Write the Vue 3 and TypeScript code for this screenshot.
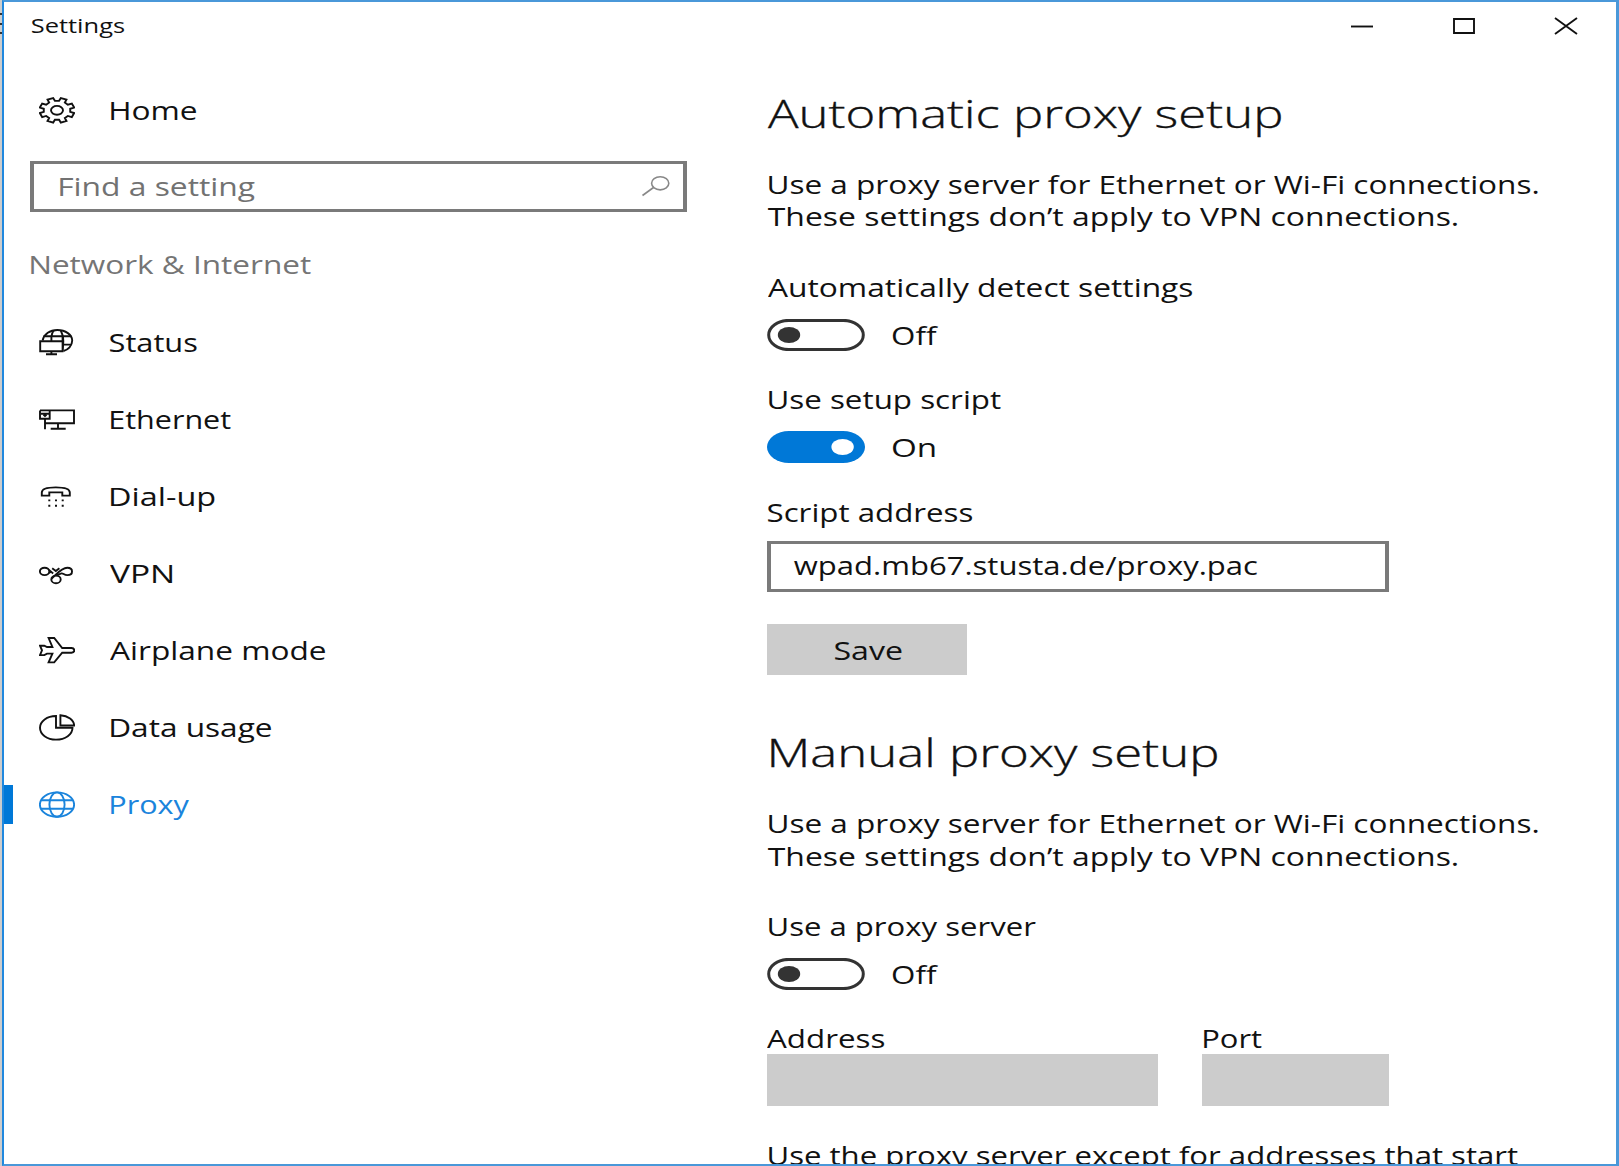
<script setup lang="ts">
import { nextTick, type Directive } from 'vue'

interface NavItem {
  id: string
  label: string
  width: number
  active?: boolean
}

interface FieldSet {
  title: string
  titleWidth: number
}

/* Stretches a line of text horizontally until its ink is exactly `width` px wide. */
function stretch(el: HTMLElement, width: number) {
  const style = getComputedStyle(el)
  const ctx = document.createElement('canvas').getContext('2d')
  if (!ctx) return
  const size = parseFloat(style.fontSize)
  const zoom = 10
  ctx.font = `${style.fontWeight} ${size * zoom}px ${style.fontFamily}`
  const text = (el.textContent ?? '').trim()
  const m = ctx.measureText(text)
  const left = m.actualBoundingBoxLeft / zoom
  const ink = left + m.actualBoundingBoxRight / zoom
  if (!ink) return
  const nudge = /^[HEDPNFUM]/.test(text) ? 1.2 : 0
  const scale = (width - nudge) / ink
  el.style.transform = `translateX(${left * scale + nudge}px) scaleX(${scale})`
}

const vFit: Directive<HTMLElement, number> = {
  mounted: (el, binding) => {
    nextTick(() => stretch(el, binding.value))
  },
}

const nav: NavItem[] = [
  { id: 'status', label: 'Status', width: 86.5 },
  { id: 'ethernet', label: 'Ethernet', width: 120.5 },
  { id: 'dialup', label: 'Dial-up', width: 104.5 },
  { id: 'vpn', label: 'VPN', width: 62 },
  { id: 'airplane', label: 'Airplane mode', width: 215 },
  { id: 'data', label: 'Data usage', width: 161 },
  { id: 'proxy', label: 'Proxy', width: 79, active: true },
]

const auto: FieldSet = { title: 'Automatic proxy setup', titleWidth: 513 }
const manual: FieldSet = { title: 'Manual proxy setup', titleWidth: 447 }

function gearPath(): string {
  const pts: string[] = []
  for (let k = 0; k < 8; k++) {
    const mid = 22.5 + k * 45
    const steps: [number, number][] = [[-13.5, 0.76], [-10, 1], [10, 1], [13.5, 0.76]]
    for (const [off, r] of steps) {
      const a = ((mid + off) * Math.PI) / 180
      pts.push(`${(18 + 17.6 * r * Math.cos(a)).toFixed(2)} ${(15.3 + 12.6 * r * Math.sin(a)).toFixed(2)}`)
    }
  }
  return `M${pts.join('L')}Z`
}
const gear = gearPath()
</script>

<template>
  <div class="window">
    <header class="titlebar">
      <span v-fit="92" class="t caption">Settings</span>
      <div class="controls">
        <svg width="24" height="18" viewBox="0 0 24 18"><path d="M1 9.5H23" /></svg>
        <svg width="24" height="18" viewBox="0 0 24 18"><path d="M2 2H22V16H2Z" /></svg>
        <svg width="24" height="18" viewBox="0 0 24 18"><path d="M1 1L23 17M23 1L1 17" /></svg>
      </div>
    </header>

    <div class="body">
      <nav class="sidebar">
        <div class="home">
          <svg class="icon" viewBox="0 0 36 30">
            <path :d="gear" />
            <ellipse cx="18" cy="15.3" rx="6" ry="4.4" />
          </svg>
          <span v-fit="86" class="t">Home</span>
        </div>

        <div class="search">
          <span v-fit="195.5" class="t">Find a setting</span>
          <svg width="30" height="22" viewBox="0 0 30 22">
            <ellipse cx="19.2" cy="8.3" rx="8.6" ry="6.6" />
            <path d="M12.5 12.5L1.5 20.5" />
          </svg>
        </div>

        <div class="group"><span v-fit="280.5" class="t">Network &amp; Internet</span></div>

        <ul class="items">
          <li v-for="item in nav" :key="item.id" :class="['item', { active: item.active }]">
            <svg class="icon" viewBox="0 0 36 30">
              <g v-if="item.id === 'status'">
                <path d="M3.6 13.5C5 7 11 3 18.3 3C26.6 3 33.2 7.8 33.2 13.6C33.2 19 29 22.8 24.5 24" />
                <path d="M4.5 9.3H32.3M1.2 14.2H23.6V24.2H1.2ZM24 17.6H32.5M12.4 9.3V14M23.6 9.3V14M12.4 24.2V27M7 27.3H18M14.8 3.5Q12.8 6 12.4 9.3M21.8 3.5Q24.6 9 24.3 14.2T23.8 23.5" />
              </g>
              <g v-else-if="item.id === 'ethernet'">
                <path d="M1 6.4H35V19.3H6M1 6.4V14.7H10.7V6.4M6 14.7V25.2M19 19.3V24.7M11.7 24.8H26.7" />
                <path d="M2 9.7H10M4.5 10.8L6 12L7.5 10.8" />
              </g>
              <g v-else-if="item.id === 'dialup'">
                <path d="M2.8 11.5C2.8 8 9 6.4 16.8 6.4C24.6 6.4 30.8 8 30.8 11.5V14.6H23.3V11.4H10.3V14.6H2.8Z" />
                <path d="M9.3 19.4H11.3M16 19.4H18M22.7 19.4H24.7M9.3 24.7H11.3M16 24.7H18M22.7 24.7H24.7" />
              </g>
              <g v-else-if="item.id === 'vpn'">
                <ellipse cx="5.6" cy="13.4" rx="4.7" ry="3.7" />
                <path d="M10 12L14.2 15.4M10 15L12.4 13.4M13.2 10.3L16.8 13L20.4 10.3" />
                <path d="M12.6 20.6C16.5 18 21.5 9.7 28.3 9.7C34.6 9.7 34.6 17.1 28.3 17.1C25 17.1 24.4 15.2 22.6 15.4C20.6 15.8 18.6 17.3 17.4 17.6" />
                <ellipse cx="17" cy="21.4" rx="4.7" ry="3.8" />
              </g>
              <g v-else-if="item.id === 'airplane'">
                <path d="M9.6 3H15.2L23.2 13H32.5C36.2 13.3 36.2 17.4 32.5 17.7H23.2L15.2 27.4H9.6L13.4 18.6H8L5.3 20.1H1L3 15.3L1 10.7H5.3L8 12H13.4Z" />
              </g>
              <g v-else-if="item.id === 'data'">
                <path d="M17 4V15.7H33.5C33.5 22.4 26.4 27.6 17 27.6C8 27.6 1 22.4 1 15.7C1 9.2 8 4 17 4Z" />
                <path d="M21.4 3.2C29 3.6 35.1 8 35.1 13.5H21.4Z" />
              </g>
              <g v-else>
                <ellipse cx="18" cy="15.6" rx="17.1" ry="12.2" />
                <ellipse cx="18" cy="15.6" rx="7.6" ry="12.2" />
                <path d="M2 11.2H34M2 19.8H34" />
              </g>
            </svg>
            <span v-fit="item.width" class="t">{{ item.label }}</span>
          </li>
        </ul>
      </nav>

      <main class="content">
        <section class="auto">
          <h1><span v-fit="auto.titleWidth" class="t">{{ auto.title }}</span></h1>
          <p class="desc">
            <span v-fit="769.5" class="t">Use a proxy server for Ethernet or Wi-Fi connections.</span>
            <span v-fit="689" class="t">These settings don’t apply to VPN connections.</span>
          </p>

          <div class="label detect"><span v-fit="424" class="t">Automatically detect settings</span></div>
          <div class="toggle-row">
            <svg class="toggle" viewBox="0 0 98 32">
              <rect class="track" x="1.7" y="1.4" width="94.6" height="29.2" rx="20" ry="14.6" />
              <ellipse class="knob" cx="22" cy="16" rx="11.2" ry="8.1" />
            </svg>
            <span v-fit="45" class="t">Off</span>
          </div>

          <div class="label script"><span v-fit="232.5" class="t">Use setup script</span></div>
          <div class="toggle-row">
            <svg class="toggle on" viewBox="0 0 98 32">
              <rect class="track" x="0" y="0" width="98" height="32" rx="22" ry="16" />
              <ellipse class="knob" cx="75.6" cy="16" rx="11.2" ry="8.1" />
            </svg>
            <span v-fit="41.5" class="t">On</span>
          </div>

          <div class="label address"><span v-fit="204" class="t">Script address</span></div>
          <div class="input"><span v-fit="463" class="t">wpad.mb67.stusta.de/proxy.pac</span></div>
          <button class="save" type="button"><span v-fit="66.5" class="t">Save</span></button>
        </section>

        <section class="manual">
          <h1><span v-fit="manual.titleWidth" class="t">{{ manual.title }}</span></h1>
          <p class="desc">
            <span v-fit="769.5" class="t">Use a proxy server for Ethernet or Wi-Fi connections.</span>
            <span v-fit="689" class="t">These settings don’t apply to VPN connections.</span>
          </p>

          <div class="label detect"><span v-fit="267.5" class="t">Use a proxy server</span></div>
          <div class="toggle-row">
            <svg class="toggle" viewBox="0 0 98 32">
              <rect class="track" x="1.7" y="1.4" width="94.6" height="29.2" rx="20" ry="14.6" />
              <ellipse class="knob" cx="22" cy="16" rx="11.2" ry="8.1" />
            </svg>
            <span v-fit="45" class="t">Off</span>
          </div>

          <div class="pair">
            <div class="field wide">
              <span v-fit="117" class="t">Address</span>
              <div class="disabled"></div>
            </div>
            <div class="field narrow">
              <span v-fit="58.5" class="t port">Port</span>
              <div class="disabled"></div>
            </div>
          </div>
          <div class="except"><span v-fit="749.5" class="t">Use the proxy server except for addresses that start</span></div>
        </section>
      </main>
    </div>
  </div>
</template>

<style>
body {
  margin: 0;
  overflow: hidden;
  background: linear-gradient(#333 0 0) 0 13px / 2px 2px no-repeat,
    linear-gradient(#333 0 0) 0 23px / 2px 2px no-repeat,
    linear-gradient(#333 0 0) 0 32px / 2px 2px no-repeat, #cdcdcd;
}
</style>

<style scoped>
.window {
  box-sizing: border-box;
  width: 1617px;
  height: 1166px;
  margin-left: 2px;
  border: 2px solid #4a98d9;
  border-left-color: #2088de;
  border-right-width: 3px;
  background: #fff;
  overflow: hidden;
  display: flex;
  flex-direction: column;
  font-family: 'Open Sans', 'Noto Sans', sans-serif;
  font-size: 25px;
  line-height: 32px;
  color: #111;
}

.t {
  display: block;
  width: max-content;
  white-space: nowrap;
  transform-origin: 0 50%;
}

svg {
  display: block;
  flex: none;
  fill: none;
  stroke: currentColor;
  stroke-width: 1.9;
}

.titlebar {
  flex: none;
  height: 57px;
  box-sizing: border-box;
  display: flex;
  justify-content: space-between;
  align-items: flex-start;
  padding: 7px 38px 0 27.5px;
}

.caption {
  font-size: 20.5px;
}

.controls {
  display: flex;
  gap: 78px;
  padding-top: 8px;
}

.controls svg {
  stroke: #111;
}

.body {
  flex: 1;
  min-height: 0;
  display: flex;
}

.sidebar {
  flex: none;
  width: 763px;
}

.home,
.item {
  display: flex;
  align-items: center;
  gap: 35px;
  padding-left: 35px;
}

.home {
  height: 32px;
  margin-top: 35px;
}

.icon {
  width: 36px;
  height: 30px;
}

.search {
  box-sizing: border-box;
  width: 657px;
  height: 51px;
  margin: 35px 0 0 26px;
  padding: 0 12px 2px 25px;
  border: solid #7a7a7a;
  border-width: 3px 4px;
  display: flex;
  align-items: center;
  justify-content: space-between;
  color: #727272;
}

.search svg {
  stroke: #888;
  stroke-width: 1.6;
}

.group {
  margin: 36px 0 0 26px;
  color: #757575;
}

.items {
  list-style: none;
  margin: 23.3px 0 0;
  padding: 0;
}

.item {
  height: 77.05px;
  background: linear-gradient(#0078d7 0 0) -10px 50% / 0 39px no-repeat;
}

.item.active {
  color: #1a84dc;
  background-position: 0 50%;
  background-size: 9px 39px;
}

.content {
  flex: none;
  width: 840px;
}

h1 {
  margin: 0;
  font-size: 38.8px;
  font-weight: 300;
  line-height: 53px;
  -webkit-text-stroke: 0.35px #111;
}

.auto h1 {
  margin: 28px 0 0 1px;
}

.manual h1 {
  margin: 51px 0 0 2.5px;
}

.desc {
  margin: 28px 0 0 1px;
  line-height: 32.3px;
}

.label {
  padding-left: 0.8px;
}

.detect {
  margin-top: 38.5px;
}

.toggle-row {
  display: flex;
  gap: 27.5px;
  height: 32px;
  margin-top: 16px;
}

.script {
  margin-top: 32.3px;
}

.address {
  margin-top: 32.5px;
}

.toggle {
  width: 98px;
  height: 32px;
  stroke: none;
}

.toggle .track {
  stroke: #333;
  stroke-width: 3;
}

.toggle .knob {
  fill: #333;
}

.toggle.on .track {
  fill: #0078d7;
  stroke: none;
}

.toggle.on .knob {
  fill: #fff;
}

.input {
  box-sizing: border-box;
  width: 621.5px;
  height: 51px;
  margin-top: 13px;
  padding: 5px 0 0 23px;
  border: solid #7a7a7a;
  border-width: 3px 4px;
}

.save {
  display: block;
  width: 199.5px;
  height: 51px;
  margin: 32.5px 0 0;
  padding: 0 0 0 67.5px;
  border: 0;
  background: #ccc;
  color: #111;
  font: inherit;
}

.pair {
  display: flex;
  gap: 44.5px;
  margin-top: 32px;
}

.port {
  margin-left: 0.5px;
}

.wide {
  width: 390.5px;
}

.narrow {
  width: 186.5px;
}

.disabled {
  height: 51.5px;
  background: #ccc;
}

.except {
  margin: 33px 0 0 1px;
}
</style>
